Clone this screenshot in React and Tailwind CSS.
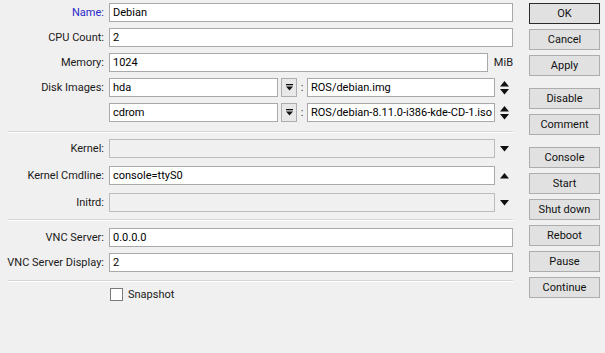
import { useState } from 'react'

const Label = ({ children, blue }) => (
  <div
    className={
      blue
        ? 'w-[104px] shrink-0 text-right text-[#2a2ac8]'
        : 'w-[104px] shrink-0 text-right text-[#1a1a1a]'
    }
  >
    {children}
  </div>
)

const Field = ({ value, disabled, className = '' }) => (
  <div
    className={
      (disabled
        ? 'bg-[#f0f0f0] border-[#bcbcbc] '
        : 'bg-white border-[#a9a9a9] ') +
      'h-[19px] border flex items-center pl-[3px] text-black whitespace-nowrap overflow-hidden ' +
      className
    }
  >
    {value}
  </div>
)

const DownArrow = () => (
  <svg width="9" height="6" viewBox="0 0 9 6">
    <path d="M0 0 H9 L4.5 5.5 Z" fill="#111" />
  </svg>
)

const UpArrow = () => (
  <svg width="9" height="6" viewBox="0 0 9 6">
    <path d="M0 5.5 H9 L4.5 0 Z" fill="#111" />
  </svg>
)

const UpDown = () => (
  <svg width="9" height="14" viewBox="0 0 9 14">
    <path d="M0 5.5 H9 L4.5 0 Z" fill="#111" />
    <path d="M0 8 H9 L4.5 13.5 Z" fill="#111" />
  </svg>
)

const DropBtn = () => (
  <div className="w-[16px] h-[19px] ml-[3px] shrink-0 border border-[#adadad] bg-[#e8e8e8] flex items-center justify-center">
    <svg width="7" height="7" viewBox="0 0 7 7">
      <rect x="0" y="0" width="7" height="1.3" fill="#111" />
      <path d="M0 2.5 H7 L3.5 6.5 Z" fill="#111" />
    </svg>
  </div>
)

const Separator = ({ className }) => (
  <div className={'ml-[8px] h-[2px] border-t border-t-[#d5d5d5] border-b border-b-white ' + className} />
)

const Row = ({ label, blue, children, className = '' }) => (
  <div className={'flex items-center h-[19px] ' + className}>
    <Label blue={blue}>{label}</Label>
    <div className="flex items-center flex-1 ml-[5px] min-w-0">{children}</div>
  </div>
)

const Trail = ({ children }) => (
  <div className="w-[18px] shrink-0 flex items-center justify-center">{children}</div>
)

const Btn = ({ children, primary, className = '' }) => (
  <button
    className={
      (primary ? 'border-[#2b2b2b] ' : 'border-[#adadad] ') +
      'h-[21px] w-full border bg-[#e1e1e1] text-[#111] flex items-center justify-center ' +
      className
    }
  >
    {children}
  </button>
)

export default function App() {
  const [snapshot, setSnapshot] = useState(false)

  return (
    <div className="w-[605px] h-[353px] bg-[#f0f0f0] flex pt-[3px] pr-[5px] font-['Roboto',sans-serif] text-[11px] leading-none select-none">
      <div className="w-[513px] flex flex-col">
        <Row label="Name:" blue>
          <Field value="Debian" className="flex-1" />
        </Row>
        <Row label="CPU Count:" className="mt-[6px]">
          <Field value="2" className="flex-1" />
        </Row>
        <Row label="Memory:" className="mt-[6px]">
          <Field value="1024" className="w-[381px]" />
          <span className="ml-[6px] text-[#1a1a1a]">MiB</span>
        </Row>
        <Row label="Disk Images:" className="mt-[6px]">
          <Field value="hda" className="w-[169px]" />
          <DropBtn />
          <span className="w-[10px] text-center text-[#333]">:</span>
          <Field value="ROS/debian.img" className="flex-1" />
          <Trail>
            <UpDown />
          </Trail>
        </Row>
        <Row label="" className="mt-[6px]">
          <Field value="cdrom" className="w-[169px]" />
          <DropBtn />
          <span className="w-[10px] text-center text-[#333]">:</span>
          <Field value="ROS/debian-8.11.0-i386-kde-CD-1.iso" className="flex-1" />
          <Trail>
            <UpDown />
          </Trail>
        </Row>

        <Separator className="mt-[9px]" />

        <Row label="Kernel:" className="mt-[6px]">
          <Field value="" disabled className="flex-1" />
          <Trail>
            <DownArrow />
          </Trail>
        </Row>
        <Row label="Kernel Cmdline:" className="mt-[8px]">
          <Field value="console=ttyS0" className="flex-1" />
          <Trail>
            <UpArrow />
          </Trail>
        </Row>
        <Row label="Initrd:" className="mt-[8px]">
          <Field value="" disabled className="flex-1" />
          <Trail>
            <DownArrow />
          </Trail>
        </Row>

        <Separator className="mt-[7px]" />

        <Row label="VNC Server:" className="mt-[7px]">
          <Field value="0.0.0.0" className="flex-1" />
        </Row>
        <Row label="VNC Server Display:" className="mt-[6px]">
          <Field value="2" className="flex-1" />
        </Row>

        <Separator className="mt-[8px]" />

        <div className="flex items-center mt-[6px] ml-[110px] h-[13px]">
          <button
            onClick={() => setSnapshot(!snapshot)}
            className="w-[13px] h-[13px] border border-[#7a7a7a] bg-white flex items-center justify-center"
          >
            {snapshot ? (
              <svg width="9" height="9" viewBox="0 0 9 9">
                <path d="M1 4.5 L3.5 7 L8 1.5" stroke="#111" strokeWidth="1.5" fill="none" />
              </svg>
            ) : null}
          </button>
          <span className="ml-[5px] text-[#1a1a1a]">Snapshot</span>
        </div>
      </div>

      <div className="ml-[16px] w-[71px] flex flex-col gap-[5px]">
        <Btn primary>OK</Btn>
        <Btn>Cancel</Btn>
        <Btn>Apply</Btn>
        <Btn className="mt-[7px]">Disable</Btn>
        <Btn>Comment</Btn>
        <Btn className="mt-[7px]">Console</Btn>
        <Btn>Start</Btn>
        <Btn>Shut down</Btn>
        <Btn>Reboot</Btn>
        <Btn>Pause</Btn>
        <Btn>Continue</Btn>
      </div>
    </div>
  )
}
